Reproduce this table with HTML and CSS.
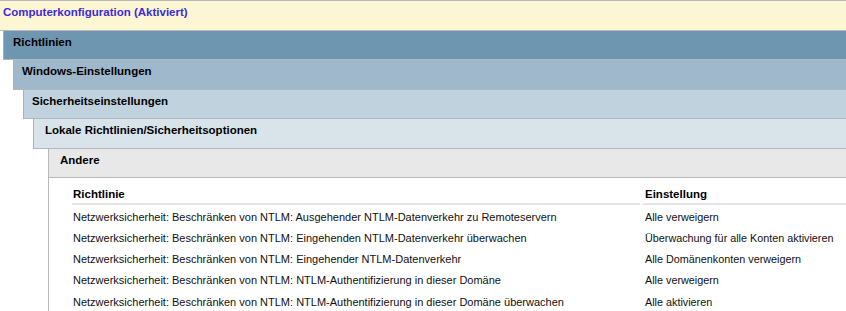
FILE: index.html
```html
<!DOCTYPE html>
<html lang="de">
<head>
<meta charset="utf-8">
<title>Computerkonfiguration</title>
<link rel="stylesheet" href="styles.css">
</head>
<body>
<div class="report">
  <div class="bar bar-top">Computerkonfiguration (Aktiviert)</div>
  <div class="section s1">
    <div class="bar b1">Richtlinien</div>
    <div class="section s2">
      <div class="bar b2">Windows-Einstellungen</div>
      <div class="section s3">
        <div class="bar b3">Sicherheitseinstellungen</div>
        <div class="section s4">
          <div class="bar b4">Lokale Richtlinien/Sicherheitsoptionen</div>
          <div class="section s5">
            <div class="bar b5">Andere</div>
            <div class="content">
              <table class="grid">
                <thead>
                  <tr><th class="col1">Richtlinie</th><th class="col2">Einstellung</th></tr>
                </thead>
                <tbody>
                  <tr><td class="col1">Netzwerksicherheit: Beschränken von NTLM: Ausgehender NTLM-Datenverkehr zu Remoteservern</td><td class="col2">Alle verweigern</td></tr>
                  <tr><td class="col1">Netzwerksicherheit: Beschränken von NTLM: Eingehenden NTLM-Datenverkehr überwachen</td><td class="col2">Überwachung für alle Konten aktivieren</td></tr>
                  <tr><td class="col1">Netzwerksicherheit: Beschränken von NTLM: Eingehender NTLM-Datenverkehr</td><td class="col2">Alle Domänenkonten verweigern</td></tr>
                  <tr><td class="col1">Netzwerksicherheit: Beschränken von NTLM: NTLM-Authentifizierung in dieser Domäne</td><td class="col2">Alle verweigern</td></tr>
                  <tr><td class="col1">Netzwerksicherheit: Beschränken von NTLM: NTLM-Authentifizierung in dieser Domäne überwachen</td><td class="col2">Alle aktivieren</td></tr>
                </tbody>
              </table>
            </div>
          </div>
        </div>
      </div>
    </div>
  </div>
</div>
</body>
</html>
```
FILE: styles.css
```css
html, body {
  margin: 0;
  padding: 0;
  background: #ffffff;
  overflow: hidden;
}
body {
  font-family: "Liberation Sans", Arial, sans-serif;
  font-size: 11px;
  color: #000;
}
.report {
  width: 846px;
}
.bar {
  box-sizing: border-box;
  font-weight: bold;
  font-size: 11.5px;
  line-height: 14px;
  border-bottom: 1px solid #b4b8bc;
  white-space: nowrap;
}
.bar-top {
  border-top: 1px solid #b9b9b9;
  background: #fdf6d5;
  color: #3b2bd8;
  height: 31px;
  padding: 4px 0 0 3px;
}
.section {
  display: flex;
  flex-direction: column;
}
.s1 { margin-left: 3px; }
.s2 { margin-left: 10px; }
.s3 { margin-left: 10px; }
.s4 { margin-left: 10px; }
.s5 { margin-left: 15px; border-left: 1px solid #b9b9b9; }
.b1, .b2, .b3, .b4 { border-left: 1px solid #a8b0b8; }
.b1 { background: #6f96b1; height: 29px; padding: 4px 0 0 9px; }
.b2 { background: #a0b8cb; height: 30px; padding: 4px 0 0 8px; }
.b3 { background: #bfd2de; height: 29px; padding: 4px 0 0 8px; }
.b4 { background: #d8e3ea; height: 30px; padding: 4px 0 0 11px; }
.b5 { background: #e8e8e8; height: 29px; padding: 4px 0 0 11px; }
.content {
  padding: 7px 0 0 23px;
  height: 140px;
}
.grid {
  border-collapse: separate;
  border-spacing: 0;
  width: 100%;
}
.grid th {
  text-align: left;
  font-weight: bold;
  font-size: 11.5px;
  height: 18px;
  padding: 0 0 0 1px;
  vertical-align: middle;
  border-bottom: 2px solid #e4e4e4;
}
.grid th.col1 { width: 567px; }
.grid th.col2 { border-left: 5px solid #fff; padding-left: 0; }
.grid td {
  height: 21.25px;
  padding: 0 0 0 1px;
  white-space: nowrap;
  vertical-align: middle;
  color: #101010;
}
.grid tbody tr:first-child td { padding-top: 1px; }
.grid td.col2 { padding-left: 5px; font-size: 10.8px; }
```
